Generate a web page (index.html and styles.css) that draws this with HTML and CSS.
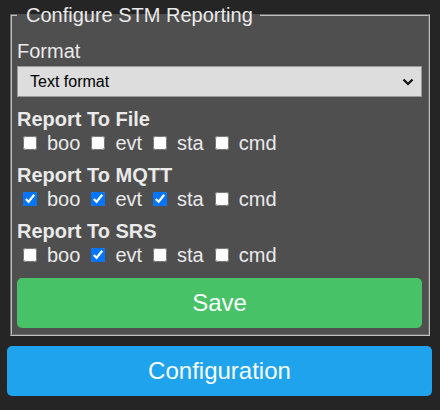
FILE: index.html
```html
<!DOCTYPE html>
<html>
<head>
<meta charset="utf-8">
<link rel="stylesheet" href="styles.css">
</head>
<body>
<div class="wrap">
  <fieldset class="box">
    <legend class="title">Configure STM Reporting</legend>
    <div class="field-label">Format</div>
    <div class="select-wrap">
      <select class="select">
        <option>Text format</option>
      </select>
      <svg class="chev" width="12" height="8" viewBox="0 0 12 8"><path d="M1.5 1.5 L6 6 L10.5 1.5" fill="none" stroke="#111" stroke-width="2.2"/></svg>
    </div>
    <div class="section">
      <div class="heading">Report To File</div>
      <div class="row">
        <label class="opt"><input type="checkbox" class="cb"><span>boo</span></label>
        <label class="opt"><input type="checkbox" class="cb"><span>evt</span></label>
        <label class="opt"><input type="checkbox" class="cb"><span>sta</span></label>
        <label class="opt"><input type="checkbox" class="cb"><span>cmd</span></label>
      </div>
    </div>
    <div class="section">
      <div class="heading">Report To MQTT</div>
      <div class="row">
        <label class="opt"><input type="checkbox" class="cb" checked><span>boo</span></label>
        <label class="opt"><input type="checkbox" class="cb" checked><span>evt</span></label>
        <label class="opt"><input type="checkbox" class="cb" checked><span>sta</span></label>
        <label class="opt"><input type="checkbox" class="cb"><span>cmd</span></label>
      </div>
    </div>
    <div class="section">
      <div class="heading">Report To SRS</div>
      <div class="row">
        <label class="opt"><input type="checkbox" class="cb"><span>boo</span></label>
        <label class="opt"><input type="checkbox" class="cb" checked><span>evt</span></label>
        <label class="opt"><input type="checkbox" class="cb"><span>sta</span></label>
        <label class="opt"><input type="checkbox" class="cb"><span>cmd</span></label>
      </div>
    </div>
    <button class="btn btn-save">Save</button>
  </fieldset>
  <button class="btn btn-config">Configuration</button>
</div>
</body>
</html>
```

FILE: styles.css
```css
html, body {
  margin: 0;
  padding: 0;
  background: #252525;
}
body {
  font-family: "Liberation Sans", Arial, sans-serif;
  font-size: 20px;
  color: #eaeaea;
}
.wrap {
  width: 425px;
  padding: 2px 8px 0 7px;
}
.box {
  margin: 0 2px 0 3px;
  padding: 0 6px 6px 5px;
  border: 2px groove #c0c0c0;
  background: #4f4f4f;
  min-width: 0;
}
.title {
  padding: 2px 7px 0 9px;
  line-height: 23px;
  color: #eaeaea;
}
.field-label {
  margin-top: 13px;
  line-height: 23px;
}
.select-wrap {
  position: relative;
  margin-top: 3px;
}
.select {
  display: block;
  width: 100%;
  height: 31px;
  box-sizing: border-box;
  -webkit-appearance: none;
  appearance: none;
  background: #dddddd;
  color: #000;
  border: 1px solid #9a9a9a;
  border-radius: 0;
  padding: 0 30px 0 12px;
  font-family: "Liberation Sans", Arial, sans-serif;
  font-size: 16px;
  margin: 0;
}
.chev {
  position: absolute;
  right: 8px;
  top: 12px;
  pointer-events: none;
}
.section {
  margin-top: 9px;
}
.select-wrap + .section {
  margin-top: 11px;
}
.heading {
  font-weight: bold;
  line-height: 23px;
}
.row {
  display: flex;
  align-items: center;
  gap: 11px;
  height: 23px;
  margin-top: 1px;
  padding-left: 6px;
  line-height: 23px;
}
.opt {
  display: inline-flex;
  align-items: center;
}
.cb {
  width: 14px;
  height: 14px;
  margin: 0 10px 1px 0;
}
.btn {
  display: block;
  width: 100%;
  height: 50px;
  border: 0;
  border-radius: 5px;
  color: #faffff;
  font-family: "Liberation Sans", Arial, sans-serif;
  font-size: 24px;
  line-height: 50px;
  padding: 0;
  cursor: pointer;
}
.btn-save {
  margin-top: 11px;
  background: #47c266;
}
.btn-config {
  margin-top: 10px;
  background: #1fa3ec;
}
```
